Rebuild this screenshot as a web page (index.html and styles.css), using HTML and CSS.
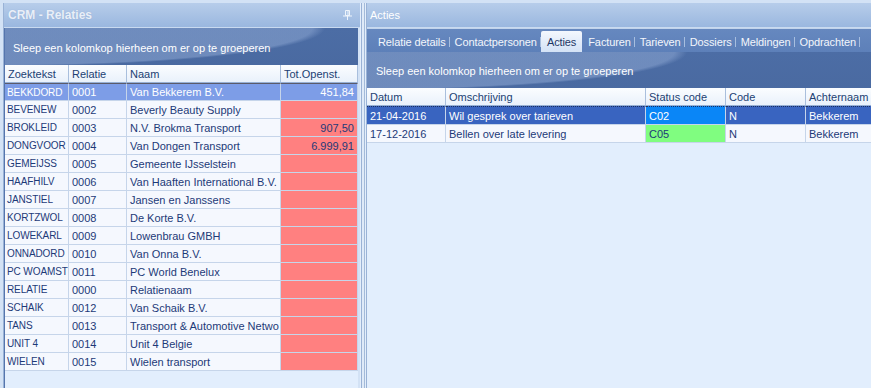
FILE: index.html
```html
<!DOCTYPE html>
<html lang="nl">
<head>
    <meta charset="UTF-8">
    <title>CRM - Relaties</title>
    <link rel="stylesheet" href="styles.css">
</head>
<body>
    <div class="workspace">
        <section class="panel panel-left">
            <header class="panel-title title-bold">
                <span>CRM - Relaties</span>
                <svg class="pin" width="9" height="10" viewBox="0 0 9 10">
                    <path d="M2.5 0.5H6.5V5.5H2.5Z" fill="none" stroke="#eef4fb" stroke-width="1"/>
                    <path d="M5 1V5" stroke="#eef4fb" stroke-width="1"/>
                    <path d="M0 6H9" stroke="#eef4fb" stroke-width="1"/>
                    <path d="M4.5 6V10" stroke="#eef4fb" stroke-width="1"/>
                </svg>
            </header>
            <div class="grid grid-left">
                <div class="group-box">Sleep een kolomkop hierheen om er op te groeperen</div>
                <table class="data data-left">
                    <colgroup>
                        <col style="width: 64px">
                        <col style="width: 58px">
                        <col style="width: 154px">
                        <col style="width: 77px">
                    </colgroup>
                    <thead>
                        <tr><th>Zoektekst</th><th>Relatie</th><th>Naam</th><th>Tot.Openst.</th></tr>
                    </thead>
                    <tbody>
                        <tr class="selected"><td>BEKKDORD</td><td>0001</td><td>Van Bekkerem B.V.</td><td class="num">451,84</td></tr>
                        <tr><td>BEVENEW</td><td>0002</td><td>Beverly Beauty Supply</td><td class="num due"></td></tr>
                        <tr><td>BROKLEID</td><td>0003</td><td>N.V. Brokma Transport</td><td class="num due">907,50</td></tr>
                        <tr><td>DONGVOOR</td><td>0004</td><td>Van Dongen Transport</td><td class="num due">6.999,91</td></tr>
                        <tr><td>GEMEIJSS</td><td>0005</td><td>Gemeente IJsselstein</td><td class="num due"></td></tr>
                        <tr><td>HAAFHILV</td><td>0006</td><td>Van Haaften International B.V.</td><td class="num due"></td></tr>
                        <tr><td>JANSTIEL</td><td>0007</td><td>Jansen en Janssens</td><td class="num due"></td></tr>
                        <tr><td>KORTZWOL</td><td>0008</td><td>De Korte B.V.</td><td class="num due"></td></tr>
                        <tr><td>LOWEKARL</td><td>0009</td><td>Lowenbrau GMBH</td><td class="num due"></td></tr>
                        <tr><td>ONNADORD</td><td>0010</td><td>Van Onna B.V.</td><td class="num due"></td></tr>
                        <tr><td>PC WOAMST</td><td>0011</td><td>PC World Benelux</td><td class="num due"></td></tr>
                        <tr><td>RELATIE</td><td>0000</td><td>Relatienaam</td><td class="num due"></td></tr>
                        <tr><td>SCHAIK</td><td>0012</td><td>Van Schaik B.V.</td><td class="num due"></td></tr>
                        <tr><td>TANS</td><td>0013</td><td>Transport &amp; Automotive Netwo</td><td class="num due"></td></tr>
                        <tr><td>UNIT 4</td><td>0014</td><td>Unit 4 Belgie</td><td class="num due"></td></tr>
                        <tr><td>WIELEN</td><td>0015</td><td>Wielen transport</td><td class="num due"></td></tr>
                    </tbody>
                </table>
            </div>
        </section>

        <div class="splitter"></div>

        <section class="panel panel-right">
            <header class="panel-title">Acties</header>
            <nav class="tabs">
                <span class="tab">Relatie details</span>
                <span class="tab">Contactpersonen</span>
                <span class="tab active">Acties</span>
                <span class="tab">Facturen</span>
                <span class="tab">Tarieven</span>
                <span class="tab">Dossiers</span>
                <span class="tab">Meldingen</span>
                <span class="tab">Opdrachten</span>
            </nav>
            <div class="grid grid-right">
                <div class="group-box">Sleep een kolomkop hierheen om er op te groeperen</div>
                <table class="data data-right">
                    <colgroup>
                        <col style="width: 79px">
                        <col style="width: 200px">
                        <col style="width: 80px">
                        <col style="width: 80px">
                        <col style="width: 90px">
                    </colgroup>
                    <thead>
                        <tr><th>Datum</th><th>Omschrijving</th><th>Status code</th><th>Code</th><th>Achternaam</th></tr>
                    </thead>
                    <tbody>
                        <tr class="selected-dark"><td>21-04-2016</td><td>Wil gesprek over tarieven</td><td class="status-blue">C02</td><td>N</td><td>Bekkerem</td></tr>
                        <tr><td>17-12-2016</td><td>Bellen over late levering</td><td class="status-green">C05</td><td>N</td><td>Bekkerem</td></tr>
                    </tbody>
                </table>
            </div>
        </section>
    </div>
</body>
</html>
```

FILE: styles.css
```css
:root {
    --frame: #d3e2f5;
    --frame-line: #99b2d6;
    --title-top: #b7cdea;
    --title-bottom: #9ab7df;
    --group-dark: #4c6da5;
    --tab-strip: #5d80b9;
    --row-bg: #f5f8fe;
    --grid-line: #c6d5ea;
    --header-line: #a9bfdd;
    --text-color: #1d3a78;
    --empty-bg: #e2eefd;
}

html, body {
    margin: 0;
    padding: 0;
}

body {
    font-family: "Liberation Sans", Arial, sans-serif;
    font-size: 11px;
    background-color: var(--frame);
    color: var(--text-color);
    width: 871px;
    height: 388px;
    overflow: hidden;
}

.workspace {
    display: flex;
    height: 388px;
    padding-top: 3px;
    box-sizing: border-box;
}

.panel {
    display: flex;
    flex-direction: column;
    overflow: hidden;
}

.panel-left {
    width: 356px;
    margin-left: 3px;
    border-left: 1px solid var(--frame-line);
}

.panel-right {
    flex: 1;
    border-left: 1px solid var(--frame-line);
}

.panel-title {
    height: 24px;
    flex: none;
    display: flex;
    align-items: center;
    justify-content: space-between;
    padding: 0 8px 0 3px;
    background: linear-gradient(var(--title-top), var(--title-bottom));
    color: #ffffff;
    font-size: 11px;
    border-bottom: 1px solid #c9daf0;
}

.title-bold {
    font-weight: bold;
    font-size: 12px;
    color: #e9eff8;
    padding-left: 4px;
    text-shadow: 0 0 1px #8fa9cf;
}

.pin {
    display: block;
}

.tabs {
    display: flex;
    flex: none;
    height: 24px;
    padding: 2px 0 0 5px;
    box-sizing: border-box;
    background: linear-gradient(#6688bf, var(--tab-strip));
    border-top: 1px solid #c2d4ec;
}

.tab {
    display: flex;
    align-items: center;
    white-space: nowrap;
    padding: 0 4px 0 5px;
    letter-spacing: -0.1px;
    color: #f3f6fb;
    font-size: 11px;
    background: linear-gradient(#a7bedf, #a7bedf) right 6px / 1px 10px no-repeat;
}

.tab:first-child {
    padding-left: 6px;
}

.tab.active {
    background: linear-gradient(#f4f8fe, #d3e2f6);
    color: #1e3766;
    border-radius: 2px 2px 0 0;
    padding: 0 6px;
    margin: 0 1px 0 0;
}

.grid {
    flex: 1;
    background-color: var(--empty-bg);
}

.grid-left {
    border-left: 1px solid #5575ad;
    margin-right: 2px;
}

.group-box {
    display: flex;
    align-items: center;
    color: #ffffff;
    font-size: 11px;
    background:
        radial-gradient(ellipse 320px 38px at 0 0, rgba(140, 166, 210, 0.55) 96%, transparent 100%),
        linear-gradient(var(--group-dark), #4a6aa1);
}

.grid-left .group-box {
    height: 37px;
    padding: 3px 0 0 8px;
    box-sizing: border-box;
}

.grid-right .group-box {
    height: 36px;
    padding: 2px 0 0 9px;
    box-sizing: border-box;
}

.data {
    border-collapse: separate;
    border-spacing: 0;
    table-layout: fixed;
}

.data-left {
    width: 353px;
}

.data-right {
    width: 529px;
}

.data th,
.data td {
    height: 17px;
    padding: 0 3px;
    text-align: left;
    white-space: nowrap;
    overflow: hidden;
    font-weight: normal;
    border-right: 1px solid var(--grid-line);
    border-bottom: 1px solid var(--grid-line);
}

.data-left td:first-child {
    padding-left: 2px;
    font-size: 10px;
    letter-spacing: -0.1px;
}

.data th {
    background: linear-gradient(#fbfdff, #e9f1fb);
    color: #213f73;
    border-right-color: var(--header-line);
    border-bottom-color: #97b0d4;
}

.data td {
    background-color: var(--row-bg);
}

.data td.num {
    text-align: right;
}

.data td.due {
    background-color: #ff8080;
}

.selected td {
    background-color: #7d9de7;
    color: #ffffff;
    border-top: 1px solid #5b5b6a;
    height: 16px;
}

.selected td.num {
    background-color: #7d9de7;
}

.selected-dark td {
    background-color: #3964c0;
    color: #ffffff;
    border-top: 1px dotted #1c2f60;
    height: 17px;
}

.selected-dark td.status-blue {
    background-color: #0a86f7;
}

.status-green {
    background-color: #80fd80 !important;
}

.splitter {
    width: 6px;
    flex: none;
    background: linear-gradient(90deg, #e4eefb 0, #e4eefb 1px, #9ab2d6 1px, #9ab2d6 2px, #dfeaf8 2px, #dfeaf8 4px, #a3bad9 4px, #a3bad9 5px, #e4eefb 5px);
}
```
